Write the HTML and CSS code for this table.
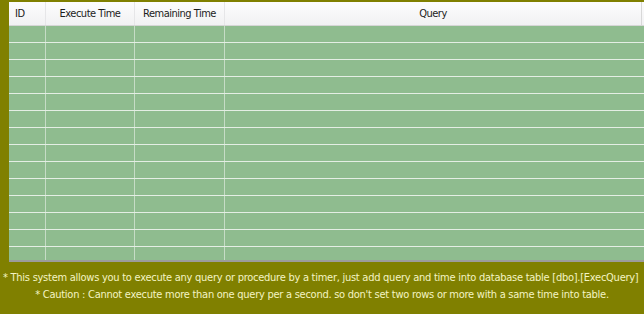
FILE: index.html
```html
<!DOCTYPE html>
<html>
<head>
<meta charset="utf-8">
<link rel="stylesheet" href="styles.css">
</head>
<body>
<div class="page">
  <div class="grid">
    <div class="row head">
      <div class="cell id">ID</div>
      <div class="cell c">Execute Time</div>
      <div class="cell c">Remaining Time</div>
      <div class="cell c last">Query</div>
    </div>
    <div class="row"><div class="cell"></div><div class="cell"></div><div class="cell"></div><div class="cell last"></div></div>
    <div class="row"><div class="cell"></div><div class="cell"></div><div class="cell"></div><div class="cell last"></div></div>
    <div class="row"><div class="cell"></div><div class="cell"></div><div class="cell"></div><div class="cell last"></div></div>
    <div class="row"><div class="cell"></div><div class="cell"></div><div class="cell"></div><div class="cell last"></div></div>
    <div class="row"><div class="cell"></div><div class="cell"></div><div class="cell"></div><div class="cell last"></div></div>
    <div class="row"><div class="cell"></div><div class="cell"></div><div class="cell"></div><div class="cell last"></div></div>
    <div class="row"><div class="cell"></div><div class="cell"></div><div class="cell"></div><div class="cell last"></div></div>
    <div class="row"><div class="cell"></div><div class="cell"></div><div class="cell"></div><div class="cell last"></div></div>
    <div class="row"><div class="cell"></div><div class="cell"></div><div class="cell"></div><div class="cell last"></div></div>
    <div class="row"><div class="cell"></div><div class="cell"></div><div class="cell"></div><div class="cell last"></div></div>
    <div class="row"><div class="cell"></div><div class="cell"></div><div class="cell"></div><div class="cell last"></div></div>
    <div class="row"><div class="cell"></div><div class="cell"></div><div class="cell"></div><div class="cell last"></div></div>
    <div class="row"><div class="cell"></div><div class="cell"></div><div class="cell"></div><div class="cell last"></div></div>
    <div class="row"><div class="cell"></div><div class="cell"></div><div class="cell"></div><div class="cell last"></div></div>
  </div>
  <div class="notes">
    <p class="note first">* This system allows you to execute any query or procedure by a timer, just add query and time into database table [dbo].[ExecQuery]</p>
    <p class="note">* Caution : Cannot execute more than one query per a second. so don't set two rows or more with a same time into table.</p>
  </div>
</div>
</body>
</html>
```
FILE: styles.css
```css
html, body {
  margin: 0;
  padding: 0;
  background: #808000;
  overflow: hidden;
}
.page {
  width: 644px;
  height: 314px;
  padding-top: 2px;
  box-sizing: border-box;
  font-family: "DejaVu Sans", Tahoma, sans-serif;
  font-stretch: condensed;
}
.grid {
  margin-left: 9px;
  height: 258px;
  overflow: hidden;
  background: #8fbc8f;
  border-bottom: 2px solid #9c9c9c;
}
.row {
  display: grid;
  grid-template-columns: 37px 89px 90px 1fr;
  height: 17px;
  box-sizing: border-box;
  border-bottom: 1px solid #e4eee4;
}
.cell {
  border-right: 1px solid #c6dcc6;
}
.cell.last {
  border-right: none;
}
.row.head {
  height: 24px;
  background: linear-gradient(#fdfdfd, #f1f1f3);
  border-bottom: 1px solid #d6d6d6;
  font-size: 11px;
  letter-spacing: -0.5px;
  color: #1c1c1c;
  line-height: 23px;
}
.head .cell {
  border-right: 1px solid #e6e6e8;
  white-space: nowrap;
}
.head .cell.last {
  border-right: 1px solid #d8d8d8;
  margin-right: 2px;
}
.head .id {
  padding-left: 6px;
}
.head .c {
  text-align: center;
}
.notes {
  padding-top: 7px;
  color: #f4f4c4;
  font-size: 11px;
  letter-spacing: -0.26px;
  line-height: 17px;
}
.note {
  margin: 0;
  text-align: center;
  white-space: nowrap;
}
.note.first {
  text-align: left;
  padding-left: 3px;
}
```
